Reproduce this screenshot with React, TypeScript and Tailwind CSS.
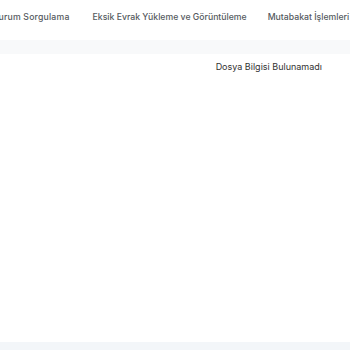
const tabs = ['Durum Sorgulama', 'Eksik Evrak Yükleme ve Görüntüleme', 'Mutabakat İşlemleri']

export default function App() {
  return (
    <div className="w-[350px] h-[350px] overflow-hidden bg-white flex flex-col" style={{ fontFamily: 'Inter, "Noto Sans", sans-serif' }}>
      <nav className="h-[40px] flex items-center gap-[21px] whitespace-nowrap -ml-[8px] pb-[5px]">
        {tabs.map((t, i) => (
          <span key={t} className={i === 0 ? 'text-[8.7px] font-medium text-[#555a60] shrink-0 mr-[2px] tracking-[0.2px]' : 'text-[8.7px] font-medium text-[#555a60] shrink-0'}>
            {t}
          </span>
        ))}
      </nav>
      <div className="h-[14px] bg-[#f8f9fa]" />
      <div className="flex-1 flex justify-end pr-[28px] pt-[6px]">
        <p className="text-[9px] text-[#333] h-fit">Dosya Bilgisi Bulunamadı</p>
      </div>
      <div className="h-[8px] bg-[#f3f6f9]" />
    </div>
  )
}
